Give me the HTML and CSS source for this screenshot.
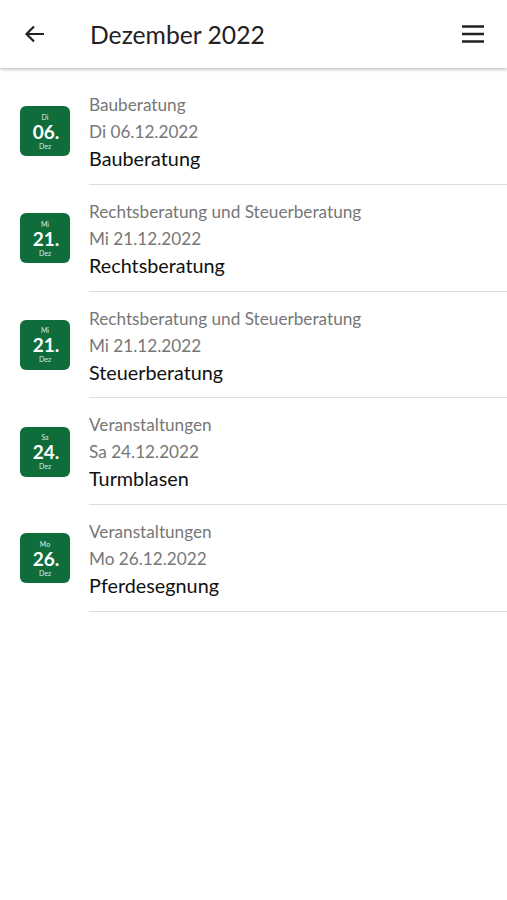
FILE: index.html
```html
<!DOCTYPE html>
<html lang="de">
<head>
<meta charset="utf-8">
<title>Dezember 2022</title>
<link rel="stylesheet" href="styles.css">
</head>
<body>
<header class="appbar">
  <svg class="icon back" viewBox="0 0 24 24" width="24" height="24"><path d="M21 12H4M11 4.5L3.5 12 11 19.5" fill="none" stroke="#222" stroke-width="2.2"/></svg>
  <h1 class="title">Dezember 2022</h1>
  <svg class="icon menu" viewBox="0 0 24 24" width="24" height="24"><path d="M1 4.5h22M1 12h22M1 19.5h22" fill="none" stroke="#222" stroke-width="2.6"/></svg>
</header>
<main class="list">
  <div class="item">
    <div class="badge"><span class="wd">Di</span><span class="day">06.</span><span class="mo">Dez</span></div>
    <div class="text">
      <div class="cat">Bauberatung</div>
      <div class="date">Di 06.12.2022</div>
      <div class="name">Bauberatung</div>
    </div>
  </div>
  <div class="item">
    <div class="badge"><span class="wd">Mi</span><span class="day">21.</span><span class="mo">Dez</span></div>
    <div class="text">
      <div class="cat">Rechtsberatung und Steuerberatung</div>
      <div class="date">Mi 21.12.2022</div>
      <div class="name">Rechtsberatung</div>
    </div>
  </div>
  <div class="item">
    <div class="badge"><span class="wd">Mi</span><span class="day">21.</span><span class="mo">Dez</span></div>
    <div class="text">
      <div class="cat">Rechtsberatung und Steuerberatung</div>
      <div class="date">Mi 21.12.2022</div>
      <div class="name">Steuerberatung</div>
    </div>
  </div>
  <div class="item">
    <div class="badge"><span class="wd">Sa</span><span class="day">24.</span><span class="mo">Dez</span></div>
    <div class="text">
      <div class="cat">Veranstaltungen</div>
      <div class="date">Sa 24.12.2022</div>
      <div class="name">Turmblasen</div>
    </div>
  </div>
  <div class="item">
    <div class="badge"><span class="wd">Mo</span><span class="day">26.</span><span class="mo">Dez</span></div>
    <div class="text">
      <div class="cat">Veranstaltungen</div>
      <div class="date">Mo 26.12.2022</div>
      <div class="name">Pferdesegnung</div>
    </div>
  </div>
</main>
</body>
</html>
```
FILE: styles.css
```css
* { box-sizing: border-box; }
html, body { margin: 0; padding: 0; background: #fff; }
body { font-family: Lato, "Open Sans", sans-serif; color: #111; width: 507px; }

.appbar {
  height: 68px;
  display: flex;
  align-items: center;
  padding: 0 22px 0 23px;
  background: #fff;
  box-shadow: 0 1px 3px rgba(0,0,0,0.22), 0 2px 4px rgba(0,0,0,0.08);
  position: relative;
}
.icon { display: block; flex: none; }
.back { width: 24px; height: 24px; margin-right: 43px; }
.title {
  flex: 1;
  margin: 0;
  font-size: 24.7px;
  font-weight: 400;
  color: #222;
}
.menu { width: 24px; height: 24px; }

.list { padding-top: 10px; }
.item {
  display: flex;
  align-items: center;
  padding-left: 20px;
}
.badge {
  width: 50px;
  height: 50px;
  flex: none;
  margin-right: 19px;
  background: #0e6d3b;
  border-radius: 6px;
  color: #fff;
  display: flex;
  flex-direction: column;
  align-items: center;
  justify-content: center;
}
.wd, .mo { font-size: 7px; line-height: 8px; opacity: 0.85; }
.day { font-size: 19px; font-weight: 700; line-height: 19px; margin: 1px 0 1px 2px; }

.text {
  flex: 1;
  padding: 13px 0 11.75px;
  border-bottom: 1px solid #ddd;
}
.cat, .date { font-size: 17.2px; line-height: 27px; color: #777; }
.name { font-size: 19.8px; line-height: 27px; color: #111; }
```
